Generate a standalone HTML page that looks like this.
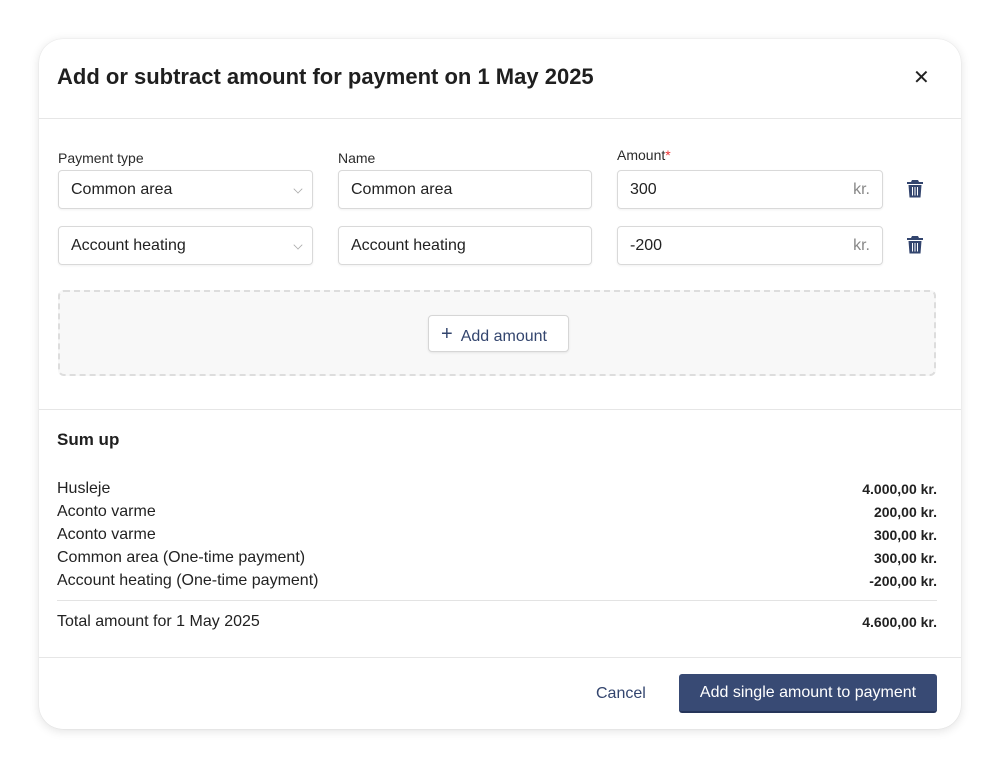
<!DOCTYPE html>
<html><head><meta charset="utf-8"><style>
*{box-sizing:border-box;margin:0;padding:0}
body{width:1000px;height:768px;background:#fff;font-family:"Liberation Sans",Arial,sans-serif;color:#1f1f1f;position:relative;overflow:hidden}
.modal{position:absolute;left:39px;top:39px;width:922px;height:690px;background:#fff;border-radius:24px;box-shadow:0 2px 10px rgba(0,0,0,.12),0 0 1px rgba(0,0,0,.15)}
.abs{position:absolute}
h1{position:absolute;left:18px;top:25px;font-size:22px;font-weight:bold;color:#1f1f1f}
.close{position:absolute;left:874px;top:26px;font-size:20px;color:#222}
.hr{position:absolute;left:0;width:922px;height:1px;background:#e6e6e6}
.lbl{position:absolute;font-size:14px;color:#2b2b2b}
.inp{position:absolute;height:39px;border:1px solid #d9d9d9;border-radius:4px;box-shadow:0 1px 2px rgba(0,0,0,.06);font-size:16px;padding:10px 0 0 12px;color:#222}
.chev{position:absolute;right:10px;top:14px;width:8px;height:8px;border-right:1px solid #aaa;border-bottom:1px solid #aaa;transform:rotate(45deg) scale(.8)}
.kr{position:absolute;right:12px;top:10px;color:#888}
.drop{position:absolute;left:19px;top:251px;width:878px;height:86px;border:2px dashed #ddd;border-radius:6px;background:#f8f8f8}
.addbtn{position:absolute;left:368px;top:23px;width:141px;height:37px;border:1px solid #d6d6d6;border-radius:4px;background:#fff;color:#33456e;font-size:16px;padding:8px 0 0 12px;box-shadow:0 1px 2px rgba(0,0,0,.08)}
.row{position:absolute;left:18px;width:880px;font-size:16px;color:#222}
.row b{position:absolute;right:0;top:1px;font-size:14px}
.primary{position:absolute;left:640px;top:635px;width:258px;height:39px;background:#384a74;border-radius:3px;color:#fff;font-size:16px;text-align:center;padding-top:10px;border-bottom:2px solid #26355a}
</style></head><body>
<div class="modal">
<h1>Add or subtract amount for payment on 1 May 2025</h1>
<div class="close">✕</div>
<div class="hr" style="top:79px"></div>
<div class="lbl" style="left:19px;top:111px">Payment type</div>
<div class="lbl" style="left:299px;top:111px">Name</div>
<div class="lbl" style="left:578px;top:108px">Amount<span style="color:#e33">*</span></div>
<div class="inp" style="left:19px;top:131px;width:255px">Common area<div class="chev"></div></div>
<div class="inp" style="left:299px;top:131px;width:254px">Common area</div>
<div class="inp" style="left:578px;top:131px;width:266px">300<span class="kr">kr.</span></div>
<div class="inp" style="left:19px;top:187px;width:255px">Account heating<div class="chev"></div></div>
<div class="inp" style="left:299px;top:187px;width:254px">Account heating</div>
<div class="inp" style="left:578px;top:187px;width:266px">-200<span class="kr">kr.</span></div>
<svg class="abs" style="left:868px;top:140px" width="16" height="19" viewBox="0 0 16 19"><path d="M5 1h6l1 2h4v2H0V3h4z M1.5 6h13l-1 12.5h-11z" fill="#33456e"/><path d="M5.5 8v8.5M8 8v8.5M10.5 8v8.5" stroke="#fff" stroke-width="1"/></svg>
<svg class="abs" style="left:868px;top:196px" width="16" height="19" viewBox="0 0 16 19"><path d="M5 1h6l1 2h4v2H0V3h4z M1.5 6h13l-1 12.5h-11z" fill="#33456e"/><path d="M5.5 8v8.5M8 8v8.5M10.5 8v8.5" stroke="#fff" stroke-width="1"/></svg>
<div class="drop"><div class="addbtn"><span style="font-size:20px;position:relative;top:-1px">+</span>&nbsp; Add amount</div></div>
<div class="hr" style="top:370px"></div>
<div class="abs" style="left:18px;top:391px;font-size:17px;font-weight:bold">Sum up</div>
<div class="row" style="top:441px">Husleje<b>4.000,00 kr.</b></div>
<div class="row" style="top:464px">Aconto varme<b>200,00 kr.</b></div>
<div class="row" style="top:487px">Aconto varme<b>300,00 kr.</b></div>
<div class="row" style="top:510px">Common area (One-time payment)<b>300,00 kr.</b></div>
<div class="row" style="top:533px">Account heating (One-time payment)<b>-200,00 kr.</b></div>
<div class="abs" style="left:18px;top:561px;width:880px;height:1px;background:#e3e3e3"></div>
<div class="row" style="top:574px">Total amount for 1 May 2025<b>4.600,00 kr.</b></div>
<div class="hr" style="top:618px"></div>
<div class="abs" style="left:557px;top:646px;font-size:16px;color:#33456e">Cancel</div>
<div class="primary">Add single amount to payment</div>
</div>
</body></html>
